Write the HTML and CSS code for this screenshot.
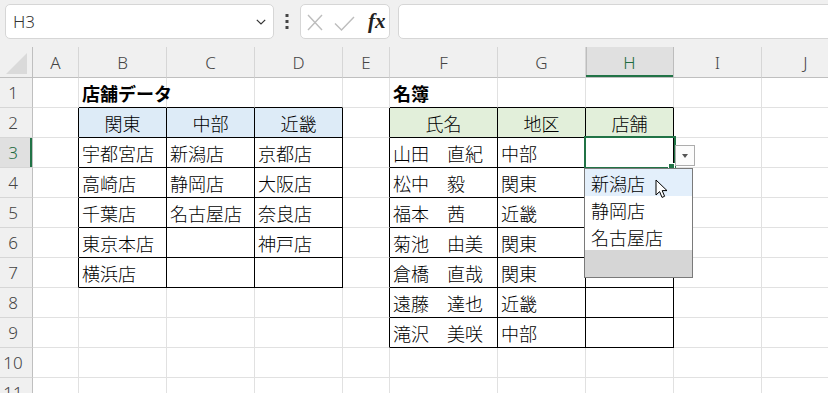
FILE: index.html
```html
<!DOCTYPE html>
<html lang="ja">
<head>
<meta charset="utf-8">
<title>店舗データ</title>
<link rel="stylesheet" href="styles.css">
</head>
<body>
<div class="toolbar">
  <div class="namebox">
    <span>H3</span>
    <svg width="10" height="6" viewBox="0 0 10 6"><polyline points="0.8,0.8 5,5 9.2,0.8" fill="none" stroke="#333" stroke-width="1.2"/></svg>
  </div>
  <div class="dots">
    <svg width="4" height="15" viewBox="0 0 4 15"><rect x="0.5" y="0" width="3" height="3" fill="#444"/><rect x="0.5" y="6" width="3" height="3" fill="#444"/><rect x="0.5" y="12" width="3" height="3" fill="#444"/></svg>
  </div>
  <div class="fxbox">
    <svg class="ico-x" width="16" height="17" viewBox="0 0 16 17"><path d="M1 1 L15 16 M15 1 L1 16" stroke="#bdbdbd" stroke-width="1.4" fill="none"/></svg>
    <svg class="ico-ok" width="21" height="15" viewBox="0 0 21 15"><polyline points="1,7.5 7.5,14 20,1" fill="none" stroke="#bdbdbd" stroke-width="1.4"/></svg>
    <span class="fx">fx</span>
  </div>
  <div class="formula"></div>
</div>

<div class="sheet">
  <div class="c corner"><svg width="33" height="31" viewBox="0 0 33 31"><polygon points="27,6 27,27 6,27" fill="#dadada"/></svg></div>
  <div class="c ch">A</div><div class="c ch">B</div><div class="c ch">C</div><div class="c ch">D</div><div class="c ch">E</div><div class="c ch">F</div><div class="c ch">G</div><div class="c ch sel">H</div><div class="c ch">I</div><div class="c ch">J</div>

  <div class="c rh">1</div><div class="c"></div><div class="c tt b">店舗データ</div><div class="c tt"></div><div class="c tt"></div><div class="c"></div><div class="c tt b">名簿</div><div class="c tt"></div><div class="c tt"></div><div class="c"></div><div class="c"></div>

  <div class="c rh">2</div><div class="c tl"></div><div class="c t hb">関東</div><div class="c t hb">中部</div><div class="c t hb">近畿</div><div class="c tl"></div><div class="c t hg">氏名</div><div class="c t hg">地区</div><div class="c t hg">店舗</div><div class="c"></div><div class="c"></div>

  <div class="c rh sel">3</div><div class="c tl"></div><div class="c t">宇都宮店</div><div class="c t">新潟店</div><div class="c t">京都店</div><div class="c tl"></div><div class="c t">山田　直紀</div><div class="c t">中部</div>
  <div class="c t active">
    <div class="selbox"></div>
    <div class="handle"></div>
    <div class="ddbtn"><span class="tri"></span></div>
    <div class="ddlist">
      <div class="dditem hl">新潟店</div>
      <div class="dditem">静岡店</div>
      <div class="dditem">名古屋店</div>
      <div class="ddfill"></div>
      <svg class="cursor" width="14" height="20" viewBox="0 0 14 20"><path d="M1 1 V16 L4.6 12.6 L7 18.4 L9.6 17.3 L7.2 11.6 H12 Z" fill="#fff" stroke="#000" stroke-width="1" stroke-linejoin="round"/></svg>
    </div>
  </div>
  <div class="c"></div><div class="c"></div>

  <div class="c rh">4</div><div class="c tl"></div><div class="c t">高崎店</div><div class="c t">静岡店</div><div class="c t">大阪店</div><div class="c tl"></div><div class="c t">松中　毅</div><div class="c t">関東</div><div class="c t"></div><div class="c"></div><div class="c"></div>

  <div class="c rh">5</div><div class="c tl"></div><div class="c t">千葉店</div><div class="c t">名古屋店</div><div class="c t">奈良店</div><div class="c tl"></div><div class="c t">福本　茜</div><div class="c t">近畿</div><div class="c t"></div><div class="c"></div><div class="c"></div>

  <div class="c rh">6</div><div class="c tl"></div><div class="c t">東京本店</div><div class="c t"></div><div class="c t">神戸店</div><div class="c tl"></div><div class="c t">菊池　由美</div><div class="c t">関東</div><div class="c t"></div><div class="c"></div><div class="c"></div>

  <div class="c rh">7</div><div class="c tl"></div><div class="c t">横浜店</div><div class="c t"></div><div class="c t"></div><div class="c tl"></div><div class="c t">倉橋　直哉</div><div class="c t">関東</div><div class="c t"></div><div class="c"></div><div class="c"></div>

  <div class="c rh">8</div><div class="c"></div><div class="c"></div><div class="c"></div><div class="c"></div><div class="c tl"></div><div class="c t">遠藤　達也</div><div class="c t">近畿</div><div class="c t"></div><div class="c"></div><div class="c"></div>

  <div class="c rh">9</div><div class="c"></div><div class="c"></div><div class="c"></div><div class="c"></div><div class="c tl"></div><div class="c t">滝沢　美咲</div><div class="c t">中部</div><div class="c t"></div><div class="c"></div><div class="c"></div>

  <div class="c rh">10</div><div class="c"></div><div class="c"></div><div class="c"></div><div class="c"></div><div class="c"></div><div class="c"></div><div class="c"></div><div class="c"></div><div class="c"></div><div class="c"></div>

  <div class="c rh">11</div><div class="c"></div><div class="c"></div><div class="c"></div><div class="c"></div><div class="c"></div><div class="c"></div><div class="c"></div><div class="c"></div><div class="c"></div><div class="c"></div>
</div>
</body>
</html>
```
FILE: styles.css
```css
html, body {
  margin: 0;
  height: 100%;
  overflow: hidden;
  background: #f0f0f0;
}
body {
  font-family: "Noto Sans", "Noto Sans CJK JP", sans-serif;
}

/* ---------- formula bar ---------- */
.toolbar {
  height: 47px;
  box-sizing: border-box;
  padding: 4px 0 0 5px;
  display: flex;
  align-items: flex-start;
  background: #f0f0f0;
}
.namebox {
  width: 269px;
  height: 35px;
  box-sizing: border-box;
  border: 1px solid #d6d6d6;
  border-radius: 5px;
  background: #fff;
  display: flex;
  align-items: center;
  justify-content: space-between;
  padding: 0 7px 0 7px;
  font-size: 17px;
  font-weight: 300;
  color: #333;
}
.dots {
  width: 26px;
  height: 35px;
  display: flex;
  align-items: center;
  justify-content: center;
}
.fxbox {
  width: 90px;
  height: 35px;
  box-sizing: border-box;
  border: 1px solid #d6d6d6;
  border-radius: 5px;
  background: #fff;
  display: flex;
  align-items: center;
  padding-left: 6px;
}
.ico-x { margin-top: 1px; }
.ico-ok { margin-left: 11px; margin-top: 3px; }
.fx {
  margin-left: 13px;
  font-family: "Liberation Serif", serif;
  font-style: italic;
  font-weight: 700;
  font-size: 21px;
  color: #222;
  line-height: 1;
}
.formula {
  flex: 1;
  height: 35px;
  margin-left: 8px;
  margin-right: -10px;
  box-sizing: border-box;
  border: 1px solid #d6d6d6;
  border-radius: 5px;
  background: #fff;
}

/* ---------- grid ---------- */
.sheet {
  display: grid;
  grid-template-columns: 33px 46px 88px 88px 88px 47px 108px 88px 88px 88px 88px;
  grid-template-rows: 31px;
  grid-auto-rows: 30px;
  background: #fff;
  font-family: "Noto Sans CJK JP", sans-serif;
  font-size: 18px;
  font-weight: 300;
  color: #000;
}
.c {
  box-sizing: border-box;
  border-right: 1px solid #e1e1e1;
  border-bottom: 1px solid #e1e1e1;
  display: flex;
  align-items: center;
  padding-left: 3px;
  white-space: nowrap;
  min-width: 0;
  line-height: 1;
}
.corner {
  background: #f0f0f0;
  border-right-color: #bfbfbf;
  border-bottom-color: #bfbfbf;
  padding: 0;
  position: relative;
}
.corner svg { position: absolute; left: 0; top: 0; }
.ch {
  background: #f0f0f0;
  border-right-color: #d6d6d6;
  border-bottom-color: #bfbfbf;
  justify-content: center;
  padding: 0;
  font-family: "Noto Sans", sans-serif;
  font-size: 17px;
  font-weight: 300;
  color: #444;
}
.ch.sel {
  background: #e0e0e0;
  border-right-color: #bdbdbd;
  box-shadow: inset 0 -2px #217346, inset 1px 0 #bdbdbd;
  color: #1d6b40;
}
.rh {
  background: #f0f0f0;
  border-right-color: #bfbfbf;
  border-bottom-color: #d6d6d6;
  justify-content: center;
  padding: 0 6px 0 0;
  font-family: "Noto Sans", sans-serif;
  font-size: 17px;
  font-weight: 300;
  color: #444;
}
.rh.sel {
  background: #e0e0e0;
  box-shadow: inset -2px 0 #217346;
  color: #1d6b40;
}

.b { font-weight: 700; }
.t { border-right-color: #000; border-bottom-color: #000; }
.tl { border-right-color: #000; }
.tt { border-bottom-color: #000; }
.hb { background: #ddebf7; justify-content: center; padding: 0; }
.hg { background: #e2efda; justify-content: center; padding: 0; }

/* ---------- active cell & list ---------- */
.active {
  position: relative;
  z-index: 2;
}
.selbox {
  position: absolute;
  left: -2px;
  top: -2px;
  right: -3px;
  bottom: -2px;
  border: 2px solid #217346;
}
.handle {
  position: absolute;
  left: 82px;
  top: 25px;
  width: 5px;
  height: 5px;
  background: #217346;
  border: 1px solid #fff;
}
.ddbtn {
  position: absolute;
  left: 89px;
  top: 7px;
  width: 20px;
  height: 21px;
  box-sizing: border-box;
  border: 1px solid #adadad;
  background: #fcfcfc;
  display: flex;
  align-items: center;
  justify-content: center;
}
.tri {
  width: 0;
  height: 0;
  border-left: 3.5px solid transparent;
  border-right: 3.5px solid transparent;
  border-top: 4px solid #555;
}
.ddlist {
  position: absolute;
  left: -2px;
  top: 30px;
  width: 109px;
  height: 110px;
  box-sizing: border-box;
  border: 1px solid #7a7a7a;
  background: #fff;
  display: flex;
  flex-direction: column;
}
.dditem {
  height: 27px;
  flex: none;
  display: flex;
  align-items: center;
  padding-left: 6px;
  font-size: 18px;
}
.dditem.hl { background: #e3effb; }
.ddfill {
  flex: 1;
  background: #d6d6d6;
}
.cursor {
  position: absolute;
  left: 70px;
  top: 10px;
}
```
